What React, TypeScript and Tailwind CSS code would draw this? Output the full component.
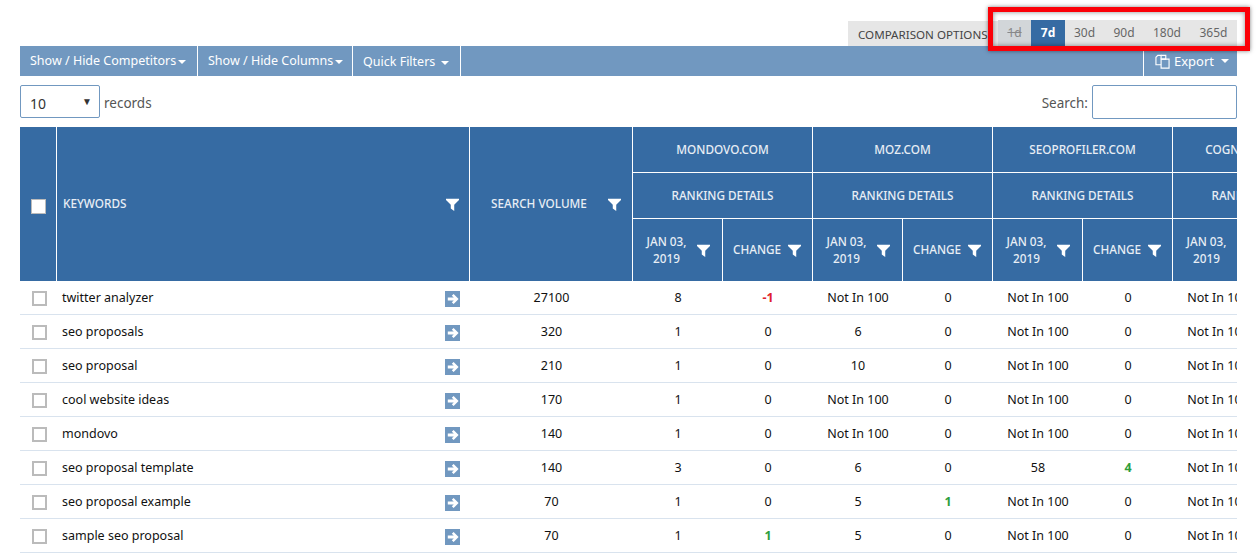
import React from "react";

const Funnel = ({ className = "" }: { className?: string }) => (
  <svg viewBox="0 0 12 12" className={"w-[13px] h-[13px] shrink-0 " + className} fill="#fff">
    <path d="M0 0.6h12v1.2L7.6 6.2V12L4.4 9.8V6.2L0 1.8z" />
  </svg>
);

const Arrow = () => (
  <span className="inline-flex w-[15px] h-[16px] bg-[#7198c0] items-center justify-center">
    <svg viewBox="0 0 12 12" className="w-[12px] h-[12px]" fill="#fff">
      <path d="M6.6 1 11.6 6 6.6 11 4.8 9.2 6.8 7.4H.8V4.6H6.8L4.8 2.8z" />
    </svg>
  </span>
);

const Caret = ({ className = "" }: { className?: string }) => (
  <span className={"inline-block w-0 h-0 border-x-[4px] border-x-transparent border-t-[4px] border-t-white align-middle " + className} />
);

const Box = () => (
  <span className="inline-block w-[15px] h-[15px] border-2 border-[#bbbbbb] bg-white align-middle" />
);

type Row = { k: string; v: string; c: string[] };
const NI = "Not In 100";
const rows: Row[] = [
  { k: "twitter analyzer", v: "27100", c: ["8", "-1", NI, "0", NI, "0", NI] },
  { k: "seo proposals", v: "320", c: ["1", "0", "6", "0", NI, "0", NI] },
  { k: "seo proposal", v: "210", c: ["1", "0", "10", "0", NI, "0", NI] },
  { k: "cool website ideas", v: "170", c: ["1", "0", NI, "0", NI, "0", NI] },
  { k: "mondovo", v: "140", c: ["1", "0", NI, "0", NI, "0", NI] },
  { k: "seo proposal template", v: "140", c: ["3", "0", "6", "0", "58", "4", NI] },
  { k: "seo proposal example", v: "70", c: ["1", "0", "5", "1", NI, "0", NI] },
  { k: "sample seo proposal", v: "70", c: ["1", "1", "5", "0", NI, "0", NI] },
];

const th = "border-r border-b border-white font-medium text-[11.75px] text-[#e8eef5] text-center p-0 pt-[1px]";
const thPlain = "border-r border-white font-medium text-[11.75px] text-[#e8eef5] p-0";
const competitors = ["MONDOVO.COM", "MOZ.COM", "SEOPROFILER.COM", "COGNITIVESEO.COM"];

const DateHead = () => (
  <div className="flex items-center pl-[3px] pr-[12px] justify-between">
    <span className="w-[66px] leading-[17px]">JAN 03,<br />2019</span>
    <Funnel />
  </div>
);
const ChangeHead = () => (
  <div className="flex items-center pl-[10px] pr-[11px] justify-between">
    <span>CHANGE</span>
    <Funnel />
  </div>
);

function cellColor(i: number, val: string) {
  if (i % 2 === 1 && val !== "0") return val === "-1" ? "text-[#e0202c] font-bold" : "text-[#2e9e3c] font-bold";
  return "";
}

export default function App() {
  return (
    <div className="w-[1258px] h-[560px] overflow-hidden bg-white relative font-['Noto_Sans','Open_Sans',sans-serif] text-[12.5px] text-[#111]">
      <div className="flex justify-end pt-[21px] pr-[21px] h-[46px]">
        <div className="bg-[#e6e6e6] w-[150px] pl-[10px] text-[11.6px] leading-[27px] text-[#444] whitespace-nowrap">COMPARISON OPTIONS</div>
        <div className="flex bg-[#e6e6e6] text-[12px] text-[#666] leading-[26px] -mt-px">
          <span className="w-[33px] text-center line-through text-[#888] bg-[#d2d6d9]">1d</span>
          <span className="w-[34px] text-center bg-[#366ba3] text-white font-bold">7d</span>
          <span className="w-[39px] text-center">30d</span>
          <span className="w-[40px] text-center">90d</span>
          <span className="w-[46px] text-center">180d</span>
          <span className="w-[47px] text-center">365d</span>
        </div>
      </div>

      <div className="absolute left-[988px] top-[7px] w-[262px] h-[44px] border-[5px] border-[#fb0007] shadow-[0_0_4px_rgba(0,0,0,0.5),inset_0_0_5px_rgba(0,0,0,0.45)] pointer-events-none" />

      <div className="mx-[20px] w-[1217px] h-[30px] bg-[#7198c0] flex text-white text-[12.5px] leading-[29px]">
        <div className="w-[178px] border-r border-white pl-[10px] whitespace-nowrap">Show / Hide Competitors<Caret className="ml-[2px]" /></div>
        <div className="w-[155px] border-r border-white pl-[10px] whitespace-nowrap">Show / Hide Columns<Caret className="ml-[2px]" /></div>
        <div className="w-[108px] border-r border-white pl-[10px] pt-[1px] whitespace-nowrap">Quick Filters<Caret className="ml-[6px]" /></div>
        <div className="ml-auto w-[94px] border-l border-white pl-[11px] flex items-center whitespace-nowrap text-[13px]">
          <svg viewBox="0 0 16 16" className="w-[15px] h-[15px] mr-[4px]" fill="none" stroke="#fff" strokeWidth="1.2">
            <path d="M6.5 5.5V1.5H3L1 3.5V11.5H6.5" />
            <path d="M6.5 5.5H11.5V1.5H6.5" />
            <path d="M6.5 5.5H15V15H6.5z" />
          </svg>
          Export<Caret className="ml-[7px]" />
        </div>
      </div>

      <div className="mx-[20px] w-[1217px] h-[51px] flex items-center justify-between text-[#555] text-[13.5px]">
        <div className="flex items-center">
          <div className="w-[80px] h-[33px] border border-[#7198c0] rounded-[2px] flex items-center justify-between pl-[9px] pr-[7px] text-[14px] text-[#333]">
            <span className="mt-[3px]">10</span>
            <span className="text-[10px] text-[#333]">▼</span>
          </div>
          <span className="ml-[4px] mt-[3px]">records</span>
        </div>
        <div className="flex items-center">
          <span className="mr-[4px] mt-[3px]">Search:</span>
          <div className="w-[145px] h-[34px] border border-[#7198c0] rounded-[2px]" />
        </div>
      </div>

      <div className="mx-[20px] w-[1217px] overflow-hidden">
        <table className="table-fixed border-separate border-spacing-0 w-[1333px]">
          <colgroup>
            <col className="w-[37px]" />
            <col className="w-[413px]" />
            <col className="w-[163px]" />
            {Array.from({ length: 8 }).map((_, i) => <col key={i} className="w-[90px]" />)}
          </colgroup>
          <thead className="bg-[#366ba3]">
            <tr className="h-[46px]">
              <th rowSpan={3} className="border-r border-white p-0 pt-[4px] pl-[1px]">
                <span className="inline-block w-[15px] h-[15px] bg-white border border-[#bbb] align-middle" />
              </th>
              <th rowSpan={3} className={thPlain}>
                <div className="flex items-center justify-between pl-[6px] pr-[10px]">
                  <span>KEYWORDS</span>
                  <Funnel />
                </div>
              </th>
              <th rowSpan={3} className={thPlain}>
                <div className="flex items-center justify-between pl-[21px] pr-[11px]">
                  <span>SEARCH VOLUME</span>
                  <Funnel />
                </div>
              </th>
              {competitors.map((c) => <th key={c} colSpan={2} className={th}>{c}</th>)}
            </tr>
            <tr className="h-[46px]">
              {competitors.map((c) => <th key={c} colSpan={2} className={th}>RANKING DETAILS</th>)}
            </tr>
            <tr className="h-[62px]">
              {competitors.map((c) => (
                <React.Fragment key={c}>
                  <th className={thPlain}><DateHead /></th>
                  <th className={thPlain}><ChangeHead /></th>
                </React.Fragment>
              ))}
            </tr>
          </thead>
          <tbody>
            {rows.map((r) => (
              <tr key={r.k} className="h-[34px]">
                <td className="border-b border-[#d9e3ee] text-center p-0 pl-[1px] pt-[1px]"><Box /></td>
                <td className="border-b border-[#d9e3ee] p-0 pl-[5px] pr-[10px]">
                  <div className="flex items-center justify-between">
                    <span className="mt-[1px]">{r.k}</span>
                    <span className="flex mt-[3px]"><Arrow /></span>
                  </div>
                </td>
                <td className="border-b border-[#d9e3ee] text-center p-0 pt-[1px]">{r.v}</td>
                {r.c.map((v, i) => (
                  <td key={i} className={"border-b border-[#d9e3ee] text-center p-0 pt-[1px] whitespace-nowrap " + cellColor(i, v)}>{v}</td>
                ))}
                <td className="border-b border-[#d9e3ee] text-center p-0">0</td>
              </tr>
            ))}
          </tbody>
        </table>
      </div>
    </div>
  );
}
